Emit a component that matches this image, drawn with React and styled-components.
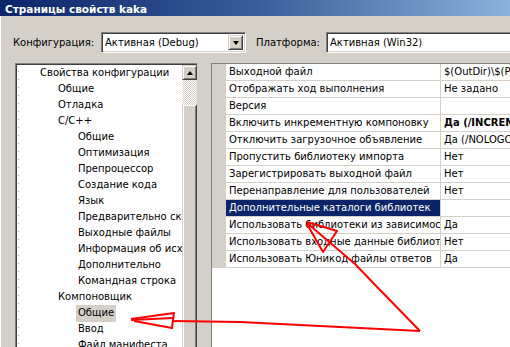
import React from 'react'
import styled, { createGlobalStyle } from 'styled-components'

const Global = createGlobalStyle`
  html, body { margin: 0; padding: 0; background: #d4d0c8; }
  body { font-family: "DejaVu Sans", Tahoma, sans-serif; font-size: 10px; color: #000; }
`

const Window = styled.div`
  position: relative;
  width: 510px;
  height: 347px;
  overflow: hidden;
  background: #d4d0c8;
  box-shadow: inset 1px 0 #ffffff;
  display: flex;
  flex-direction: column;
`

const TitleBar = styled.div`
  height: 16px;
  flex-shrink: 0;
  padding: 3px 0 0 5px;
  box-sizing: border-box;
  background: linear-gradient(to right, #0a246a 0%, #3a5c98 50%, #8eb0dc 100%);
  color: #fff;
  font-weight: bold;
  font-size: 10.5px;
  line-height: 12px;
  white-space: nowrap;
`

const ConfigRow = styled.div`
  display: flex;
  align-items: center;
  margin-top: 16px;
  padding-left: 13px;
  height: 21px;
  flex-shrink: 0;
`

const Label = styled.div`
  width: ${p => p.$w}px;
  flex-shrink: 0;
  margin-left: ${p => p.$ml || 0}px;
  white-space: nowrap;
`

const Combo = styled.div`
  width: ${p => p.$w}px;
  flex-shrink: 0;
  height: 21px;
  box-sizing: border-box;
  background: #fff;
  border-top: 1px solid #808080;
  border-left: 1px solid #808080;
  border-bottom: 1px solid #fff;
  border-right: 1px solid #fff;
  box-shadow: inset 1px 1px #404040, inset -1px -1px #d4d0c8;
  display: flex;
  align-items: center;
  padding: 0 2px 0 3px;
  white-space: nowrap;
`

const ComboText = styled.div`
  flex: 1;
  overflow: hidden;
`

const DropButton = styled.div`
  width: 15px;
  height: 15px;
  box-sizing: border-box;
  background: #d4d0c8;
  border-top: 1px solid #d4d0c8;
  border-left: 1px solid #d4d0c8;
  border-right: 1px solid #404040;
  border-bottom: 1px solid #404040;
  box-shadow: inset 1px 1px #fff, inset -1px -1px #808080;
  display: flex;
  align-items: center;
  justify-content: center;
  &::after {
    content: '';
    border-left: 3.5px solid transparent;
    border-right: 3.5px solid transparent;
    border-top: 4px solid #000;
  }
`

const Body = styled.div`
  flex: 1;
  display: flex;
  margin-top: 10px;
  min-height: 0;
`

const TreeBox = styled.div`
  width: 182px;
  margin-left: 15px;
  flex-shrink: 0;
  box-sizing: border-box;
  border-top: 1px solid #808080;
  border-left: 1px solid #808080;
  box-shadow: inset 1px 1px #404040;
  padding: 1px 0 0 1px;
  display: flex;
  background: #fff;
`

const TreeList = styled.div`
  flex: 1;
  overflow: hidden;
  background-image: repeating-linear-gradient(to bottom, #a0a0a0 0 1px, transparent 1px 8px);
  background-size: 1px 100%;
  background-repeat: no-repeat;
  background-position: 1px 6px;
`

const indent = [21, 39, 59]

const TreeRow = styled.div`
  height: 16px;
  padding-left: ${p => indent[p.$level]}px;
  white-space: nowrap;
`

const TreeLabel = styled.span`
  display: inline-block;
  padding: 0 2px;
  line-height: 16px;
  height: 17px;
  background: ${p => (p.$selected ? '#d4d0c8' : 'transparent')};
`

const ScrollBar = styled.div`
  width: 15px;
  flex-shrink: 0;
  display: flex;
  flex-direction: column;
`

const ScrollUp = styled(DropButton)`
  height: 15px;
  width: 15px;
  &::after {
    border-top: none;
    border-bottom: 4px solid #000;
  }
`

const ScrollTrack = styled.div`
  height: 25px;
  background-color: #d4d0c8;
  background-image: repeating-conic-gradient(#fff 0 25%, #d4d0c8 0 50%);
  background-size: 2px 2px;
`

const ScrollThumb = styled.div`
  flex: 1;
  box-sizing: border-box;
  background: #d4d0c8;
  border-left: 1px solid #d4d0c8;
  border-right: 1px solid #404040;
  box-shadow: inset 1px 1px #fff, inset -1px 0 #808080;
`

const PropPane = styled.div`
  flex: 1;
  margin-left: 14px;
  min-width: 0;
  overflow: hidden;
  background: #fff;
  border-top: 1px solid #808080;
  border-left: 1px solid #808080;
`

const Grid = styled.div`
  display: grid;
  grid-template-columns: 14px 215px 1fr;
`

const Gutter = styled.div`
  background: #d4d0c8;
  height: 17px;
`

const Cell = styled.div`
  height: 17px;
  box-sizing: border-box;
  line-height: 16px;
  padding-left: 3px;
  border-bottom: 1px solid #d4d0c8;
  border-right: ${p => (p.$name ? '1px solid #d4d0c8' : 'none')};
  white-space: nowrap;
  overflow: hidden;
  font-weight: ${p => (p.$bold ? 'bold' : 'normal')};
  background: ${p => (p.$active ? '#0a246a' : '#fff')};
  color: ${p => (p.$active ? '#fff' : '#000')};
`

const Marks = styled.svg`
  position: absolute;
  left: 0;
  top: 0;
  pointer-events: none;
`

const tree = [
  ['Свойства конфигурации', 0],
  ['Общие', 1],
  ['Отладка', 1],
  ['C/C++', 1],
  ['Общие', 2],
  ['Оптимизация', 2],
  ['Препроцессор', 2],
  ['Создание кода', 2],
  ['Язык', 2],
  ['Предварительно скомпилированные заголовки', 2],
  ['Выходные файлы', 2],
  ['Информация об исходном коде', 2],
  ['Дополнительно', 2],
  ['Командная строка', 2],
  ['Компоновщик', 1],
  ['Общие', 2, true],
  ['Ввод', 2],
  ['Файл манифеста', 2],
]

const props = [
  ['Выходной файл', '$(OutDir)\\$(ProjectName).exe'],
  ['Отображать ход выполнения', 'Не задано'],
  ['Версия', ''],
  ['Включить инкрементную компоновку', 'Да (/INCREMENTAL)', true],
  ['Отключить загрузочное объявление', 'Да (/NOLOGO)'],
  ['Пропустить библиотеку импорта', 'Нет'],
  ['Зарегистрировать выходной файл', 'Нет'],
  ['Перенаправление для пользователей', 'Нет'],
  ['Дополнительные каталоги библиотек', '', false, true],
  ['Использовать библиотеки из зависимостей', 'Да'],
  ['Использовать входные данные библиотек', 'Нет'],
  ['Использовать Юникод файлы ответов', 'Да'],
]

export default function App() {
  return (
    <>
      <Global />
      <Window>
        <TitleBar>Страницы свойств kaka</TitleBar>
        <ConfigRow>
          <Label $w={88}>Конфигурация:</Label>
          <Combo $w={145}>
            <ComboText>Активная (Debug)</ComboText>
            <DropButton />
          </Combo>
          <Label $w={70} $ml={10}>Платформа:</Label>
          <Combo $w={220}>
            <ComboText>Активная (Win32)</ComboText>
          </Combo>
        </ConfigRow>
        <Body>
          <TreeBox>
            <TreeList>
              {tree.map(([text, level, sel], i) => (
                <TreeRow key={i} $level={level}>
                  <TreeLabel $selected={sel}>{text}</TreeLabel>
                </TreeRow>
              ))}
            </TreeList>
            <ScrollBar>
              <ScrollUp />
              <ScrollTrack />
              <ScrollThumb />
            </ScrollBar>
          </TreeBox>
          <PropPane>
            <Grid>
              {props.map(([name, value, bold, active], i) => (
                <React.Fragment key={i}>
                  <Gutter />
                  <Cell $name $active={active}>{name}</Cell>
                  <Cell $bold={bold}>{value}</Cell>
                </React.Fragment>
              ))}
            </Grid>
          </PropPane>
        </Body>
        <Marks width="510" height="347" viewBox="0 0 510 347">
          <g fill="none" stroke="#ff0000" strokeWidth="2" strokeLinejoin="round">
            <polyline points="131,319 174,313 172,328 134,321" />
            <polyline points="131,320 173,318" />
            <polyline points="172,321 240,322 300,325 360,328 420,331" />
            <polyline points="420,331 380,290 355,264 307,223" />
            <polyline points="307,222 337,231 323,252 307,224" />
          </g>
        </Marks>
      </Window>
    </>
  )
}
